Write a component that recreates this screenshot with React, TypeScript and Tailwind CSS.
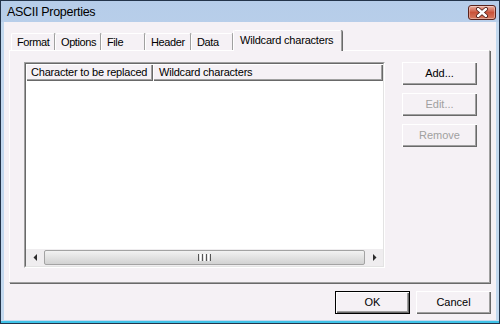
import clsx from "clsx"

const tabs = [
  { label: "Format", w: "w-[44px]" },
  { label: "Options", w: "w-[46px]" },
  { label: "File", w: "w-[44px]" },
  { label: "Header", w: "w-[46px]" },
  { label: "Data", w: "w-[42px]" },
]

function CloseButton() {
  return (
    <div className="w-[28px] h-[15px] rounded-[3px] border border-[#5a231c] bg-gradient-to-b from-[#eab0a2] via-[#c9533a] to-[#d77a60] flex items-center justify-center shadow-[inset_0_0_0_1px_rgba(255,255,255,0.35)]">
      <svg width="14" height="11" viewBox="0 0 14 11">
        <path d="M3 2 L11 9 M11 2 L3 9" stroke="#4a1a14" strokeWidth="4" strokeLinecap="round" />
        <path d="M3 2 L11 9 M11 2 L3 9" stroke="#ffffff" strokeWidth="2.4" strokeLinecap="round" />
      </svg>
    </div>
  )
}

function Button({
  children,
  disabled,
  isDefault,
}: {
  children: string
  disabled?: boolean
  isDefault?: boolean
}) {
  return (
    <div
      className={clsx(
        "w-[75px] h-[23px] flex items-center justify-center text-[11px] bg-[#f5f1f5]",
        disabled ? "text-[#a0a0a0]" : "text-black",
        isDefault
          ? "border border-black shadow-[inset_1px_1px_0_#fff,inset_-1px_-1px_0_#696969,inset_-2px_-2px_0_#a0a0a0]"
          : "shadow-[inset_1px_1px_0_#fff,inset_-1px_-1px_0_#696969,inset_-2px_-2px_0_#a0a0a0]"
      )}
    >
      {children}
    </div>
  )
}

function ScrollArrow({ dir }: { dir: "left" | "right" }) {
  return (
    <div className="w-[17px] h-full flex items-center justify-center">
      <svg width="4" height="7" viewBox="0 0 4 7">
        {dir === "left" ? (
          <path d="M4 0 L4 7 L0.5 3.5 Z" fill="#2b2b2b" />
        ) : (
          <path d="M0 0 L0 7 L3.5 3.5 Z" fill="#2b2b2b" />
        )}
      </svg>
    </div>
  )
}

function ListView() {
  return (
    <div className="w-[361px] h-[206px] border border-t-[#a0a0a0] border-l-[#a0a0a0] border-r-white border-b-white">
      <div className="w-full h-full border border-t-[#696969] border-l-[#696969] border-r-[#e3e3e3] border-b-[#e3e3e3] bg-white flex flex-col">
        <div className="h-[17px] flex bg-[#f5f1f5] text-[11px] text-black tracking-[-0.2px]">
          <div className="w-[127px] h-full flex items-center pl-[5px] shadow-[inset_1px_1px_0_#fff,inset_-1px_-1px_0_#696969,inset_-2px_-2px_0_#a0a0a0]">
            Character to be replaced
          </div>
          <div className="flex-1 h-full flex items-center pl-[6px] shadow-[inset_1px_1px_0_#fff,inset_-1px_-1px_0_#696969,inset_-2px_-2px_0_#a0a0a0]">
            Wildcard characters
          </div>
        </div>
        <div className="flex-1" />
        <div className="h-[17px] flex bg-[#efedef]">
          <ScrollArrow dir="left" />
          <div className="flex-1 py-[1px] px-[1px]">
            <div className="h-full rounded-[2px] border border-[#a3a3a3] bg-gradient-to-b from-[#f2f2f2] to-[#d2d2d2] flex items-center justify-center gap-[1px]">
              <div className="w-[1px] h-[7px] bg-[#555]" />
              <div className="w-[1px] h-[7px] bg-white" />
              <div className="w-[1px] h-[7px] bg-[#555]" />
              <div className="w-[1px] h-[7px] bg-white" />
              <div className="w-[1px] h-[7px] bg-[#555]" />
              <div className="w-[1px] h-[7px] bg-white" />
              <div className="w-[1px] h-[7px] bg-[#555]" />
            </div>
          </div>
          <ScrollArrow dir="right" />
        </div>
      </div>
    </div>
  )
}

export default function App() {
  return (
    <div
      className="w-[500px] h-[324px] border border-[#23344a] bg-gradient-to-b from-[#b6cde9] to-[#cfe0f2] flex flex-col"
      style={{ fontFamily: '"Liberation Sans", Arial, sans-serif' }}
    >
      <div className="h-[21px] flex items-start justify-between pl-[6px] pr-[3px]">
        <span className="text-[12.5px] text-black tracking-[-0.3px] pt-[4px] leading-[14px]">ASCII Properties</span>
        <div className="pt-[4px]">
          <CloseButton />
        </div>
      </div>
      <div className="flex-1 px-[3px] pb-[1px] border-b-2 border-b-[#3fc3e8] bg-[#c3d9ef]">
        <div className="w-full h-full bg-[#f5f1f5] flex flex-col pt-[8px] pl-[5px] pr-[5px]">
          <div className="h-[20px] flex items-end pl-[2px]">
            {tabs.map((t) => (
              <div
                key={t.label}
                className={clsx(
                  t.w,
                  "h-[17px] flex items-center pl-[5px] text-[11px] tracking-[-0.4px] text-black border-t border-l border-t-white border-l-white border-r border-r-[#a0a0a0] shadow-[1px_0_0_#696969] rounded-tl-[2px] rounded-tr-[2px]"
                )}
              >
                {t.label}
              </div>
            ))}
            <div className="w-[109px] h-[21px] -mb-[1px] relative z-10 bg-[#f5f1f5] flex items-center pl-[6px] pb-[2px] text-[11px] tracking-[-0.2px] text-black border-t border-l border-t-white border-l-white border-r border-r-[#a0a0a0] shadow-[1px_0_0_#696969] rounded-tl-[2px] rounded-tr-[2px]">
              Wildcard characters
            </div>
          </div>
          <div className="w-[481px] h-[233px] border border-t-white border-l-white border-r-[#a0a0a0] border-b-[#a0a0a0] shadow-[1px_1px_0_#696969] flex items-start pt-[11px] pl-[14px]">
            <ListView />
            <div className="ml-[17px] flex flex-col gap-[8px]">
              <Button>Add...</Button>
              <Button disabled>Edit...</Button>
              <Button disabled>Remove</Button>
            </div>
          </div>
          <div className="flex justify-end gap-[6px] mt-[8px]">
            <Button isDefault>OK</Button>
            <Button>Cancel</Button>
          </div>
        </div>
      </div>
    </div>
  )
}
